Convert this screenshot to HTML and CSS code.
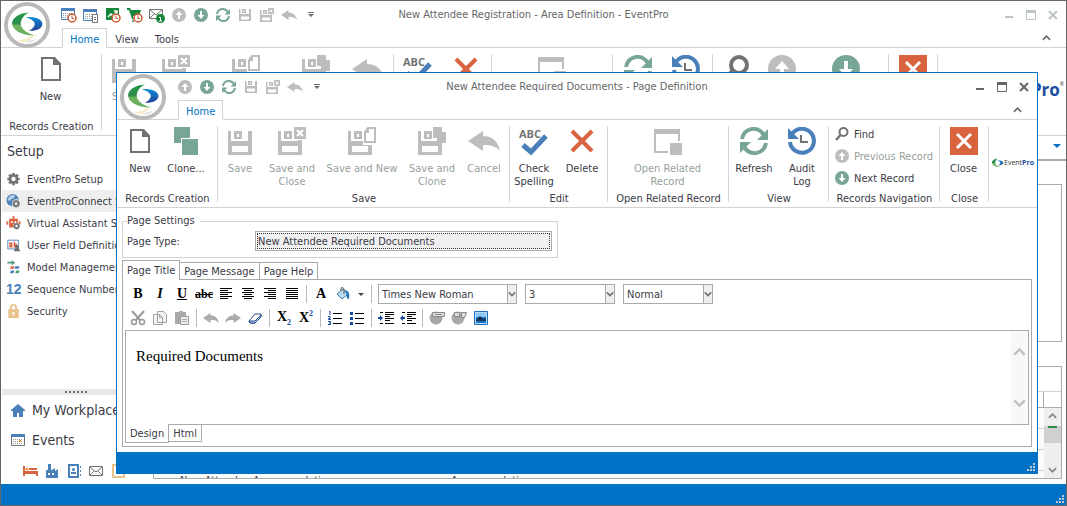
FILE: index.html
```html
<!DOCTYPE html>
<html lang="en">
<head>
<meta charset="utf-8">
<title>New Attendee Registration - Area Definition - EventPro</title>
<link rel="stylesheet" href="styles.css">
</head>
<body>
<svg class="defs" aria-hidden="true">
  <defs>
    <linearGradient id="gGreen" x1="0" y1="0" x2="0" y2="1"><stop offset="0" stop-color="#1f9a45"/><stop offset=".5" stop-color="#2f8b4c"/><stop offset=".55" stop-color="#6fb35f"/><stop offset="1" stop-color="#63ad5b"/></linearGradient>
    <linearGradient id="gBlue" x1="0" y1="0" x2="0" y2="1"><stop offset="0" stop-color="#0e8ade"/><stop offset=".5" stop-color="#1668b8"/><stop offset="1" stop-color="#263f91"/></linearGradient>
  </defs>
  <symbol id="swirl" viewBox="0 0 32 28"><path fill="url(#gGreen)" d="M18 1.500C8 2 .5 7 .5 13S10 26 26 25.500C17 24 9.500 19 9.500 13.500 9.500 8 13 4 18 1.500z"/><path fill="url(#gBlue)" d="M15 6.500C25 5.500 32 9 32 13.500S26 21 18 20.500c4-2 6-4.500 6-7S21 8.500 15 6.500z"/></symbol>
  <symbol id="orb" viewBox="0 0 46 46"><circle cx="23" cy="23" r="21" fill="#fff" stroke="#b9b9b9" stroke-width="4"/><svg x="7" y="9" width="32" height="27"><use href="#swirl"/></svg><path fill="#f5e9bd" d="M13 38c7 0 12-2 17-5-1 3-5 6-12 7z"/><path fill="#dedede" d="M20 40c5-1 9-2 13-3-3 3-8 4-13 3z"/></symbol>

  <symbol id="new" viewBox="0 0 28 28"><path fill="none" stroke="#727272" stroke-width="2" d="M5 3h12l6 6v16H5z"/><path fill="#727272" d="M16 2h2l6 7v1h-8z"/></symbol>
  <symbol id="clone" viewBox="0 0 28 28"><path fill="#77a596" d="M2 0h16v11h-9v5H2zM10 12h16v16H10z"/></symbol>
  <symbol id="floppy" viewBox="0 0 24 24"><path fill="currentColor" fill-rule="evenodd" d="M0 0h3v10h17V0h4v24H0zM4 15v6h16v-6zM6 0h8v8H6zM9 3v3h2V3z"/></symbol>
  <symbol id="save" viewBox="0 0 28 28"><svg x="2" y="4" width="24" height="24"><use href="#floppy"/></svg></symbol>
  <symbol id="saveclose" viewBox="0 0 28 28"><svg x="0" y="4" width="24" height="24"><use href="#floppy"/></svg><path fill="#fff" d="M15 0h13v13H15z"/><path fill="currentColor" d="M16 0h12v12H16z"/><path stroke="#fff" stroke-width="2" d="M19 3l6 6M25 3l-6 6"/></symbol>
  <symbol id="savenew" viewBox="0 0 28 28"><svg x="0" y="4" width="24" height="24"><use href="#floppy"/></svg><path fill="#fff" d="M15 0h13v18H15z"/><path fill="#fff" stroke="currentColor" stroke-width="2" d="M20 1h7v14H17V5z"/><path fill="currentColor" d="M16 6l5-5v5z"/></symbol>
  <symbol id="saveclone" viewBox="0 0 28 28"><svg x="0" y="4" width="24" height="24"><use href="#floppy"/></svg><path fill="currentColor" d="M15 0h9v5h4v11h-9v-5h-4z"/></symbol>
  <symbol id="undo" viewBox="0 0 32 28"><path fill="currentColor" d="M0 14L15 4v5c9 0 15 5 17 15-4-5-9-6-17-6v6z"/></symbol>
  <symbol id="check" viewBox="0 0 28 28"><path fill="none" stroke="#4a80ba" stroke-width="5" d="M3 18l8 7L26 9"/></symbol>
  <symbol id="delete" viewBox="0 0 28 28"><path stroke="#d9623f" stroke-width="4" d="M4 4l20 20M24 4L4 24"/></symbol>
  <symbol id="related" viewBox="0 0 28 28"><path fill="#bdbdbd" d="M0 2h26v5H0zM0 7h2v17h12v2H0zM24 7h2v7h-2zM16 16h12v12H16z"/></symbol>
  <symbol id="refresh" viewBox="0 0 28 28"><path fill="none" stroke="#77a596" stroke-width="4" d="M2 12C4 1 17-2 24 8M26 16C24 27 11 30 4 20"/><path fill="#77a596" d="M28 2v11H17zM0 26V15h11z"/></symbol>
  <symbol id="audit" viewBox="0 0 28 28"><path fill="none" stroke="#4a80ba" stroke-width="4" d="M4 7a12 12 0 1 1-2 8"/><path fill="#4a80ba" d="M0 1v11h11z"/><path fill="none" stroke="#727272" stroke-width="2" d="M13 8v7h7"/></symbol>
  <symbol id="find" viewBox="0 0 28 28"><circle cx="17" cy="10" r="8" fill="none" stroke="#727272" stroke-width="4"/><path stroke="#727272" stroke-width="5" d="M11 16L2 26"/></symbol>
  <symbol id="up" viewBox="0 0 28 28"><circle cx="14" cy="14" r="14" fill="#bdbdbd"/><path fill="#fff" d="M14 6l7 8h-5v8h-4v-8H7z"/></symbol>
  <symbol id="down" viewBox="0 0 28 28"><circle cx="14" cy="14" r="14" fill="#77a596"/><path fill="#fff" d="M14 22l7-8h-5V6h-4v8H7z"/></symbol>
  <symbol id="close" viewBox="0 0 28 28"><path fill="#d9623f" d="M0 0h28v28H0z"/><path stroke="#fff" stroke-width="3" d="M7 7l14 14M21 7L7 21"/></symbol>

  <symbol id="clock" viewBox="0 0 10 10"><circle cx="5" cy="5" r="4" fill="#fff" stroke="#c9562f" stroke-width="1.5"/><path fill="none" stroke="#c9562f" d="M5 2.500v3h2"/></symbol>
  <symbol id="cal" viewBox="0 0 14 13"><path fill="#fff" stroke="#4a80ba" d="M.5.5h13v11H.5z"/><path fill="#4a80ba" d="M0 0h14v3H0z"/><path stroke="#8b9bab" stroke-dasharray="1 1" d="M2 5.500h10M2 7.500h10M2 9.500h10"/></symbol>
  <symbol id="calclock" viewBox="0 0 16 16"><svg width="14" height="13" y="1"><use href="#cal"/></svg><svg x="6" y="6" width="10" height="10"><use href="#clock"/></svg></symbol>
  <symbol id="caldoc" viewBox="0 0 16 16"><svg width="14" height="13" y="2"><use href="#cal"/></svg><path fill="#fff" stroke="#727272" d="M9.500 7.500h5v8h-5z"/><path stroke="#727272" d="M11 10.500h2M11 12.500h2"/></symbol>
  <symbol id="chart" viewBox="0 0 16 16"><path fill="#15863a" d="M1 1h13v12H1z"/><path fill="none" stroke="#fff" stroke-width="1.500" d="M3 10l3-3 2 2 4-5M9 4h3v3"/><svg x="6" y="6" width="10" height="10"><use href="#clock"/></svg></symbol>
  <symbol id="cart" viewBox="0 0 16 16"><path fill="#15863a" d="M0 1h3l1 2h10l-2 6H6v2h7v1H5L2 3H0z"/><circle cx="6" cy="14" r="1" fill="#15863a"/><svg x="6" y="6" width="10" height="10"><use href="#clock"/></svg></symbol>
  <symbol id="mail" viewBox="0 0 16 16"><path fill="#fff" stroke="#727272" d="M1.500 3.500h13v9h-13zM2 4l6 5 6-5M2 12l4-4M14 12l-4-4"/></symbol>
  <symbol id="mailone" viewBox="0 0 16 16"><svg width="16" height="16" x="-1" y="-1"><use href="#mail"/></svg><circle cx="11.500" cy="11.500" r="4.500" fill="#15863a"/><path stroke="#fff" d="M10 10.500h1.500V14M10 14h3"/></symbol>

  <symbol id="gear" viewBox="0 0 16 16"><circle cx="8" cy="8" r="4" fill="none" stroke="currentColor" stroke-width="3"/><path stroke="currentColor" stroke-width="3" d="M8 1v3M8 12v3M1 8h3M12 8h3M3 3l2 2M11 11l2 2M13 3l-2 2M3 13l2-2"/></symbol>
  <symbol id="globe" viewBox="0 0 16 16"><circle cx="7" cy="7" r="7" fill="#4a80ba"/><path fill="#b5cde6" d="M3 3c3-3 6-2 7-1L8 5 5 6 4 8 1 7zM9 7l4-2v4H9z"/><circle cx="11" cy="11" r="5" fill="#efefef"/><svg x="6" y="6" width="10" height="10" color="#727272"><use href="#gear"/></svg></symbol>
  <symbol id="robot" viewBox="0 0 16 16"><path fill="#d9623f" d="M7 0h2v3h4v10H3V3h4zM0 6h2v4H0zM14 6h2v4h-2z"/><path fill="#fff" d="M5 6h2v2H5zM9 6h2v2H9z"/><circle cx="11.500" cy="11.500" r="4" fill="#fff"/><svg x="7" y="7" width="9" height="9" color="#727272"><use href="#gear"/></svg></symbol>
  <symbol id="field" viewBox="0 0 16 16"><path fill="#fff" stroke="#4a80ba" d="M1.500 2.500h12v10h-12z"/><path fill="none" stroke="#d9623f" stroke-width="1.500" d="M3 6h3v4H4V8h2M9 4v6h2V7H9"/><path fill="#727272" d="M10 8h4v4l2 3H8l2-3z"/></symbol>
  <symbol id="model" viewBox="0 0 16 16"><path fill="#4f9b7d" d="M1 2h5V0l4 3-4 3V4H1z"/><path fill="#4a80ba" d="M10 7h5l-1 3H9zM5 12h4l-1 3H4z"/><path fill="#d9623f" d="M5 7h4l-1 3H4z"/><path fill="#4f9b7d" d="M11 12h4l-1 3h-4z"/></symbol>
  <symbol id="lock" viewBox="0 0 16 16"><path fill="none" stroke="#e8c28b" stroke-width="2" d="M5 7V4c0-4 6-4 6 0v3"/><path fill="#e8c28b" d="M2 6h12v10H2z"/><path fill="#fff" d="M7 9h2v4H7z"/></symbol>
  <symbol id="house" viewBox="0 0 16 16"><path fill="#4a80ba" d="M8 2l7 6v1h-2v6H9v-4H7v4H3V9H1V8z"/></symbol>
  <symbol id="calbig" viewBox="0 0 16 16"><path fill="#fff" stroke="#727272" d="M1.500 2.500h13v11h-13z"/><path fill="#4a80ba" d="M1 2h14v3H1z"/><path stroke="#999" stroke-dasharray="1 1" d="M3 7.500h10M3 9.500h10M3 11.500h10"/><path fill="#e8953a" d="M9 8h2v2H9z"/></symbol>
  <symbol id="bed" viewBox="0 0 16 16"><path fill="#d9623f" d="M1 3h2v5h13v5h-2v-2H3v2H1zM7 5h8v2H7z"/><circle cx="5" cy="6" r="1.500" fill="#e8953a"/></symbol>
  <symbol id="factory" viewBox="0 0 16 16"><path fill="#4a80ba" d="M2 15V7h2V1h3v6h1l3-2v3l3-2v9z"/><path fill="#fff" d="M4 10h2v2H4zM8 10h2v2H8z"/></symbol>
  <symbol id="contact" viewBox="0 0 16 16"><path fill="#fff" stroke="#4a80ba" stroke-width="2" d="M3 2h9v12H3z"/><circle cx="7.500" cy="6.500" r="1.500" fill="#4a80ba"/><path fill="#4a80ba" d="M5 9h5v2H5zM14 3h1v2h-1zM14 7h1v2h-1zM14 11h1v2h-1z"/></symbol>
  <symbol id="board" viewBox="0 0 16 16"><path fill="#fff" stroke="#e8c28b" stroke-width="2" d="M3 2h11v12H3z"/><path fill="#4a80ba" d="M6 5h5v2H6z"/></symbol>
  <symbol id="chev" viewBox="0 0 10 6"><path fill="none" stroke="currentColor" stroke-width="2" d="M1 5l4-4 4 4"/></symbol>
  <symbol id="more" viewBox="0 0 6 6"><path fill="#727272" d="M0 0h6v1H0zM0 2h6L3 5z"/></symbol>
  <symbol id="wmin" viewBox="0 0 12 12"><path fill="currentColor" d="M2 7h8v2H2z"/></symbol>
  <symbol id="wmax" viewBox="0 0 12 12"><path fill="none" stroke="currentColor" d="M1.500 1.500h9v9h-9z"/><path fill="currentColor" d="M1 1h10v3H1z"/></symbol>
  <symbol id="wx" viewBox="0 0 12 12"><path stroke="currentColor" stroke-width="2" d="M2 2l8 8M10 2l-8 8"/></symbol>
  <symbol id="grip" viewBox="0 0 8 8"><path fill="#c3cbd2" d="M6 0h2v2H6zM6 3h2v2H6zM3 3h2v2H3zM6 6h2v2H6zM3 6h2v2H3zM0 6h2v2H0z"/></symbol>

  <symbol id="left" viewBox="0 0 16 16"><path stroke="#000" d="M2 2.500h12M2 4.500h8M2 6.500h12M2 8.500h8M2 10.500h12M2 12.500h8"/></symbol>
  <symbol id="center" viewBox="0 0 16 16"><path stroke="#000" d="M2 2.500h12M4 4.500h8M2 6.500h12M4 8.500h8M2 10.500h12M4 12.500h8"/></symbol>
  <symbol id="right" viewBox="0 0 16 16"><path stroke="#000" d="M2 2.500h12M6 4.500h8M2 6.500h12M6 8.500h8M2 10.500h12M6 12.500h8"/></symbol>
  <symbol id="justify" viewBox="0 0 16 16"><path stroke="#000" d="M2 2.500h12M2 4.500h12M2 6.500h12M2 8.500h12M2 10.500h12M2 12.500h12"/></symbol>
  <symbol id="bucket" viewBox="0 0 16 16"><path fill="#b9dcf3" stroke="#3d7ba8" d="M2 8l6-5 5 5-6 5z"/><path fill="none" stroke="#555" d="M6 5V2c2-1 3 0 3 2v4"/><path fill="#2f78bd" d="M9 4c5 0 6 4 5 9-3 0-2-3-3-6z"/></symbol>
  <symbol id="cut" viewBox="0 0 16 16"><path stroke="#999" stroke-width="2" d="M2 1l8 9M14 1l-8 9"/><circle cx="4" cy="12" r="2.500" fill="#fff" stroke="#999" stroke-width="1.500"/><circle cx="12" cy="12" r="2.500" fill="#fff" stroke="#999" stroke-width="1.500"/></symbol>
  <symbol id="copy" viewBox="0 0 16 16"><path fill="#f4f4f4" stroke="#a3a3a3" d="M5.500 1.500h6l3 3v8h-9zM1.500 4.500h6l3 3v7h-9zM7.500 4.500v3h3"/></symbol>
  <symbol id="paste" viewBox="0 0 16 16"><path fill="#aaa" d="M1 2h4V1h4v1h3v12H1z"/><path fill="#eee" stroke="#999" d="M6.500 6.500h8v8h-8z"/><path stroke="#aaa" d="M8 9.500h5M8 11.500h5"/></symbol>
  <symbol id="eraser" viewBox="0 0 16 16"><path fill="#fff" stroke="#244a8c" d="M2 11l6-7h6v2l-6 7H3z"/><path fill="#b9cff0" stroke="#244a8c" d="M2 11h6l6-6v2l-6 6H3z"/></symbol>
  <symbol id="numlist" viewBox="0 0 16 16"><path stroke="#000" d="M6 3.500h9M6 8.500h9M6 13.500h9"/><path fill="none" stroke="#174a9c" d="M2 1.500h1V5M1 6.500h2v2H1.500v1H4M1 11.500h2.500v3H1M2 13h1"/></symbol>
  <symbol id="bullist" viewBox="0 0 16 16"><path stroke="#000" d="M6 3.500h9M6 8.500h9M6 13.500h9"/><path fill="#174a9c" d="M1 2h3v3H1zM1 7h3v3H1zM1 12h3v3H1z"/></symbol>
  <symbol id="indent" viewBox="0 0 16 16"><path stroke="#000" d="M2 2.500h3M7 2.500h9M7 4.500h9M7 6.500h5M7 8.500h9M7 10.500h5M2 13.500h3M7 13.500h9"/><path fill="#174a9c" d="M0 7h2V5l3 3-3 3V9H0z"/></symbol>
  <symbol id="outdent" viewBox="0 0 16 16"><path stroke="#000" d="M2 2.500h3M7 2.500h9M7 4.500h9M7 6.500h5M7 8.500h9M7 10.500h5M2 13.500h3M7 13.500h9"/><path fill="#174a9c" d="M5 7H3V5L0 8l3 3V9h2z"/></symbol>
  <symbol id="link" viewBox="0 0 16 16"><circle cx="7" cy="8" r="6.500" fill="#a8a8a8"/><path fill="#ddd" stroke="#888" d="M3.500 2.500h12v4h-12z"/><path stroke="#888" d="M6 4.500h7"/></symbol>
  <symbol id="unlink" viewBox="0 0 16 16"><circle cx="7" cy="8" r="6.500" fill="#a8a8a8"/><path fill="#ddd" stroke="#888" d="M3.500 2.500h5v4h-5zM10.500 2.500h5l-2 5h-3z"/></symbol>
  <symbol id="image" viewBox="0 0 16 16"><path fill="#b9dcf8" stroke="#1f6fc0" d="M1.500 1.500h13v13h-13z"/><path fill="#1474d0" d="M3 3h10v10H3z"/><path fill="#8cc7f7" d="M3 3h10v4H3z"/><path fill="#16324f" d="M3 10l4-4 3 3 2-1 1 2v1H3z"/></symbol>
</svg>

<div class="window main">
  <header class="header">
    <svg class="orb"><use href="#orb"/></svg>
    <div class="quick">
      <button aria-label="Event calendar"><svg><use href="#calclock"/></svg></button>
      <button aria-label="Event list"><svg><use href="#caldoc"/></svg></button>
      <button aria-label="Reports"><svg><use href="#chart"/></svg></button>
      <button aria-label="Orders"><svg><use href="#cart"/></svg></button>
      <button aria-label="Messages"><svg><use href="#mailone"/></svg></button>
      <button aria-label="Previous"><svg class="i14"><use href="#up"/></svg></button>
      <button aria-label="Next"><svg class="i14"><use href="#down"/></svg></button>
      <button aria-label="Refresh"><svg class="i14"><use href="#refresh"/></svg></button>
      <button aria-label="Save" class="off"><svg class="i12"><use href="#floppy"/></svg></button>
      <button aria-label="Save and close" class="off"><svg class="i14"><use href="#saveclose"/></svg></button>
      <button aria-label="Undo" class="off"><svg><use href="#undo"/></svg></button>
      <button aria-label="Customize"><svg class="i6"><use href="#more"/></svg></button>
    </div>
    <h1 class="caption">New Attendee Registration - Area Definition - EventPro</h1>
    <div class="controls faded">
      <button aria-label="Minimize"><svg><use href="#wmin"/></svg></button>
      <button aria-label="Maximize"><svg><use href="#wmax"/></svg></button>
      <button aria-label="Close window"><svg><use href="#wx"/></svg></button>
    </div>
    <nav class="tabs">
      <a href="#home" class="current">Home</a><a href="#view">View</a><a href="#tools">Tools</a>
      <button aria-label="Collapse ribbon"><svg><use href="#chev"/></svg></button>
    </nav>
  </header>
  <div class="ribbon">
    <section class="group g-create"><div class="tools"><button><svg><use href="#new"/></svg>New</button></div><h2>Records Creation</h2></section>
    <section class="group g-save"><div class="tools">
      <button class="off w44"><svg><use href="#save"/></svg>Save</button>
      <button class="off w60"><svg><use href="#saveclose"/></svg>Save and<br>Close</button>
      <button class="off w80"><svg><use href="#savenew"/></svg>Save and New</button>
      <button class="off w60"><svg><use href="#saveclone"/></svg>Save and<br>Clone</button>
      <button class="off w44"><svg class="wide"><use href="#undo"/></svg>Cancel</button>
    </div><h2>Save</h2></section>
    <section class="group g-edit"><div class="tools">
      <button class="w48"><span class="spell"><b>ABC</b><svg><use href="#check"/></svg></span>Check<br>Spelling</button>
      <button class="w48"><svg><use href="#delete"/></svg>Delete</button>
    </div><h2>Edit</h2></section>
    <section class="group g-related"><div class="tools"><button class="off"><svg><use href="#related"/></svg>Open Related<br>Record</button></div><h2>Open Related Record</h2></section>
    <section class="group g-view"><div class="tools">
      <button class="w48"><svg><use href="#refresh"/></svg>Refresh</button>
      <button class="w48"><svg><use href="#audit"/></svg>Audit<br>Log</button>
    </div><h2>View</h2></section>
    <section class="group g-navwide"><div class="tools">
      <button class="w44"><svg><use href="#find"/></svg>Find</button>
      <button class="w48 off"><svg><use href="#up"/></svg>Previous</button>
      <button class="w80"><svg><use href="#down"/></svg>Next Record</button>
    </div><h2>Records Navigation</h2></section>
    <section class="group g-close"><div class="tools"><button><svg><use href="#close"/></svg>Close</button></div><h2>Close</h2></section>
    <div class="brand large"><svg><use href="#swirl"/></svg><span>Event<b>Pro</b></span><sup>®</sup></div>
  </div>

  <div class="workspace">
    <aside class="sidebar">
      <h2>Setup</h2>
      <nav class="items">
        <a href="#setup"><svg color="#727272"><use href="#gear"/></svg>EventPro Setup</a>
        <a href="#connect" class="picked"><svg><use href="#globe"/></svg>EventProConnect Setup</a>
        <a href="#assistant"><svg><use href="#robot"/></svg>Virtual Assistant Setup</a>
        <a href="#fields"><svg><use href="#field"/></svg>User Field Definitions</a>
        <a href="#models"><svg><use href="#model"/></svg>Model Management</a>
        <a href="#sequence"><b class="twelve">12</b>Sequence Numbers</a>
        <a href="#security"><svg><use href="#lock"/></svg>Security</a>
      </nav>
      <div class="splitter"></div>
      <nav class="areas">
        <a href="#workplace"><svg><use href="#house"/></svg>My Workplace</a>
        <a href="#events"><svg><use href="#calbig"/></svg>Events</a>
      </nav>
      <div class="shortcuts">
        <button aria-label="Rooms"><svg><use href="#bed"/></svg></button>
        <button aria-label="Venues"><svg><use href="#factory"/></svg></button>
        <button aria-label="Contacts"><svg><use href="#contact"/></svg></button>
        <button aria-label="Mail"><svg><use href="#mail"/></svg></button>
        <button aria-label="Setup"><svg><use href="#board"/></svg></button>
      </div>
    </aside>
    <main class="content">
      <div class="strip"><i class="tri"></i></div>
      <div class="panel upper"></div>
      <div class="panel lower">
        <div class="find-row"></div>
        <div class="gridhead"><span></span></div>
        <div class="gridbody">
          <ul class="rows"><li></li><li></li><li></li><li><span>New Attendee Accommodation</span><span>Accommodation</span></li></ul>
          <div class="scroll"><svg><use href="#chev"/></svg><i class="thumb"></i><svg class="flip"><use href="#chev"/></svg></div>
        </div>
      </div>
    </main>
  </div>
  <footer class="status"><svg><use href="#grip"/></svg></footer>
</div>

<div class="window dialog" role="dialog" aria-label="New Attendee Required Documents">
  <header class="header">
    <svg class="orb"><use href="#orb"/></svg>
    <div class="quick">
      <button aria-label="Previous"><svg class="i14"><use href="#up"/></svg></button>
      <button aria-label="Next"><svg class="i14"><use href="#down"/></svg></button>
      <button aria-label="Refresh"><svg class="i14"><use href="#refresh"/></svg></button>
      <button aria-label="Save" class="off"><svg class="i12"><use href="#floppy"/></svg></button>
      <button aria-label="Save and close" class="off"><svg class="i14"><use href="#saveclose"/></svg></button>
      <button aria-label="Undo" class="off"><svg><use href="#undo"/></svg></button>
      <button aria-label="Customize"><svg class="i6"><use href="#more"/></svg></button>
    </div>
    <h1 class="caption">New Attendee Required Documents - Page Definition</h1>
    <div class="controls">
      <button aria-label="Minimize"><svg><use href="#wmin"/></svg></button>
      <button aria-label="Maximize"><svg><use href="#wmax"/></svg></button>
      <button aria-label="Close window"><svg><use href="#wx"/></svg></button>
    </div>
    <nav class="tabs">
      <a href="#home" class="current">Home</a>
      <button aria-label="Collapse ribbon"><svg><use href="#chev"/></svg></button>
    </nav>
  </header>
  <div class="ribbon">
    <section class="group g-create"><div class="tools start">
      <button class="w44"><svg><use href="#new"/></svg>New</button>
      <button class="w48"><svg><use href="#clone"/></svg>Clone...</button>
    </div><h2>Records Creation</h2></section>
    <section class="group g-save"><div class="tools">
      <button class="off w44"><svg><use href="#save"/></svg>Save</button>
      <button class="off w60"><svg><use href="#saveclose"/></svg>Save and<br>Close</button>
      <button class="off w80"><svg><use href="#savenew"/></svg>Save and New</button>
      <button class="off w60"><svg><use href="#saveclone"/></svg>Save and<br>Clone</button>
      <button class="off w44"><svg class="wide"><use href="#undo"/></svg>Cancel</button>
    </div><h2>Save</h2></section>
    <section class="group g-edit"><div class="tools">
      <button class="w48"><span class="spell"><b>ABC</b><svg><use href="#check"/></svg></span>Check<br>Spelling</button>
      <button class="w48"><svg><use href="#delete"/></svg>Delete</button>
    </div><h2>Edit</h2></section>
    <section class="group g-related"><div class="tools"><button class="off"><svg><use href="#related"/></svg>Open Related<br>Record</button></div><h2>Open Related Record</h2></section>
    <section class="group g-view"><div class="tools">
      <button class="w48"><svg><use href="#refresh"/></svg>Refresh</button>
      <button class="w48"><svg><use href="#audit"/></svg>Audit<br>Log</button>
    </div><h2>View</h2></section>
    <section class="group g-nav"><div class="stack">
      <button><svg><use href="#find"/></svg>Find</button>
      <button class="off"><svg><use href="#up"/></svg>Previous Record</button>
      <button><svg><use href="#down"/></svg>Next Record</button>
    </div><h2>Records Navigation</h2></section>
    <section class="group g-close"><div class="tools"><button><svg><use href="#close"/></svg>Close</button></div><h2>Close</h2></section>
    <div class="brand"><svg><use href="#swirl"/></svg><span>Event<b>Pro</b></span></div>
  </div>

  <div class="form">
    <fieldset class="settings">
      <legend>Page Settings</legend>
      <label for="ptype">Page Type:</label>
      <div class="field"><input id="ptype" type="text" readonly value="New Attendee Required Documents"></div>
    </fieldset>
    <div class="pagetabs">
      <button class="current">Page Title</button><button>Page Message</button><button>Page Help</button>
    </div>
    <div class="pane">
      <div class="bar">
        <button aria-label="Bold"><b>B</b></button><button aria-label="Italic"><b><i>I</i></b></button><button aria-label="Underline"><b><u>U</u></b></button><button aria-label="Strikethrough"><b class="strike">abc</b></button>
        <button aria-label="Align left"><svg><use href="#left"/></svg></button><button aria-label="Align center"><svg><use href="#center"/></svg></button><button aria-label="Align right"><svg><use href="#right"/></svg></button><button aria-label="Justify"><svg><use href="#justify"/></svg></button>
        <span class="sep"></span>
        <button aria-label="Font colour"><b>A</b></button><button aria-label="Fill colour"><svg><use href="#bucket"/></svg></button><button aria-label="More colours" class="slim"><i class="tri small"></i></button>
        <span class="sep"></span>
        <div class="picks">
          <div class="pick font"><select aria-label="Font"><option>Times New Roman</option></select><svg><use href="#chev"/></svg></div>
          <div class="pick"><select aria-label="Size"><option>3</option></select><svg><use href="#chev"/></svg></div>
          <div class="pick"><select aria-label="Style"><option>Normal</option></select><svg><use href="#chev"/></svg></div>
        </div>
      </div>
      <div class="bar">
        <button aria-label="Cut"><svg><use href="#cut"/></svg></button><button aria-label="Copy"><svg><use href="#copy"/></svg></button><button aria-label="Paste"><svg><use href="#paste"/></svg></button>
        <span class="sep"></span>
        <button aria-label="Undo" class="off"><svg><use href="#undo"/></svg></button><button aria-label="Redo" class="off"><svg class="mirror"><use href="#undo"/></svg></button><button aria-label="Clear"><svg><use href="#eraser"/></svg></button>
        <span class="sep"></span>
        <button aria-label="Subscript"><b>X<sub>2</sub></b></button><button aria-label="Superscript"><b>X<sup>2</sup></b></button>
        <span class="sep"></span>
        <button aria-label="Numbered list"><svg><use href="#numlist"/></svg></button><button aria-label="Bulleted list"><svg><use href="#bullist"/></svg></button>
        <span class="sep"></span>
        <button aria-label="Indent"><svg><use href="#indent"/></svg></button><button aria-label="Outdent"><svg><use href="#outdent"/></svg></button>
        <span class="sep"></span>
        <button aria-label="Link"><svg><use href="#link"/></svg></button><button aria-label="Remove link"><svg><use href="#unlink"/></svg></button><button aria-label="Image"><svg><use href="#image"/></svg></button>
      </div>
      <div class="editor">
        <textarea aria-label="Page title">Required Documents</textarea>
        <div class="rail"><svg><use href="#chev"/></svg><svg class="flip"><use href="#chev"/></svg></div>
      </div>
      <div class="modes"><button class="current">Design</button><button>Html</button></div>
    </div>
  </div>
  <footer class="status"><svg><use href="#grip"/></svg></footer>
</div>
</body>
</html>
```
FILE: styles.css
```css
* { box-sizing: border-box; }
body { margin: 0; overflow: hidden; font: 11px/13px "DejaVu Sans Condensed", "Noto Sans", sans-serif; color: #3b3b46; }
button { padding: 0; border: 0; background: none; font: inherit; color: inherit; }
a { color: inherit; text-decoration: none; }
h1, h2, ul { margin: 0; padding: 0; font-size: 11px; font-weight: 400; list-style: none; }
svg { display: block; flex: none; }
.defs { position: absolute; width: 0; height: 0; }
.off { color: #bdbdbd; }

/* Window frame */
.window { display: flex; flex-direction: column; background: #fff; }
.main { height: 100vh; border: 1px solid #666; }
.dialog { position: fixed; inset: 72px 29px 32px 116px; border: 1px solid #0072c6; }
.header { display: grid; grid-template: 27px 20px / 61px minmax(0, 1fr) auto minmax(0, 1fr) 61px; flex: none; box-shadow: inset 0 -1px #d2d2d2; }
.orb { grid-row: 1 / 3; width: 46px; height: 46px; margin: 1px 0 0 3px; }
.quick { display: flex; margin-left: -4px; }
.quick button { display: grid; place-items: center; width: 22px; }
.quick svg { width: 16px; height: 16px; }
.quick .i14 { width: 14px; height: 14px; }
.quick .i12 { width: 12px; height: 12px; }
.quick .i6 { width: 6px; height: 6px; }
.caption { align-self: center; color: #666; }
.controls { grid-column: 4 / 6; display: flex; justify-content: flex-end; padding-right: 2px; color: #666; }
.controls.faded { color: #bcc5bf; }
.controls button { display: grid; place-items: center; width: 22px; }
.controls svg { width: 12px; height: 12px; }
.tabs { grid-column: 2 / 6; display: flex; }
.tabs a { padding: 4px 7px 0; border: 1px solid transparent; }
.tabs .current { border-color: #d2d2d2; border-bottom-color: #fff; background: #fff; color: #0072c6; }
.tabs button { margin: 0 15px 0 auto; color: #727272; }
.tabs svg { width: 9px; height: 6px; }

/* Ribbon */
.ribbon { display: flex; flex: none; height: 88px; padding: 3px 0 2px; border-bottom: 1px solid #d2d2d2; }
.group { display: flex; flex-direction: column; flex: none; background: linear-gradient(#d6d6d6, #d6d6d6) right 3px / 1px 76px no-repeat; text-align: center; white-space: nowrap; }
.group h2 { margin-top: auto; }
.g-create { width: 101px; }
.g-save { width: 292px; }
.g-edit { width: 98px; }
.g-related { width: 121px; }
.g-view { width: 100px; }
.g-nav { width: 111px; }
.g-navwide { width: 176px; }
.g-close { width: 49px; }
.tools { display: flex; justify-content: center; padding: 4px 2px 0 0; }
.tools.start { justify-content: flex-start; padding-left: 1px; }
.g-save .tools { justify-content: flex-start; }
.tools button { display: flex; flex-direction: column; align-items: center; gap: 7px; }
.tools svg { width: 28px; height: 28px; }
.tools .wide { width: 32px; }
.group .off { color: #979f9b; }
.group .off svg { color: #bdbdbd; }
.w44 { width: 44px; }
.w48 { width: 48px; }
.w60 { width: 60px; }
.w80 { width: 80px; }
.spell { position: relative; }
.spell b { position: absolute; left: -1px; top: 0; font: 700 11px/13px "Open Sans", sans-serif; color: #727272; }
.stack { display: flex; flex-direction: column; align-items: flex-start; padding-left: 6px; }
.stack button { display: flex; align-items: center; gap: 5px; height: 22px; }
.stack svg { width: 14px; height: 14px; }
.brand { display: flex; align-items: center; flex: 1; padding: 0 0 2px 2px; font: 7px/10px "Open Sans", sans-serif; color: #333; }
.brand svg { width: 13px; height: 10px; }
.brand b { color: #1c4f9f; }
.brand.large { align-items: flex-start; justify-content: flex-end; padding: 29px 2px 0 0; font-size: 17px; line-height: 20px; }
.brand.large svg { width: 32px; height: 24px; }
.brand sup { font-size: 5px; line-height: 8px; }

/* Sidebar */
.workspace { display: flex; flex: 1; min-height: 0; }
.sidebar { display: flex; flex-direction: column; width: 150px; padding-left: 1px; overflow: hidden; white-space: nowrap; }
.sidebar h2 { padding: 7px 5px 9px; font-size: 14px; line-height: 16px; }
.items a { display: flex; align-items: center; gap: 6px; height: 22px; padding-left: 4px; }
.items svg { width: 15px; height: 14px; }
.picked { background: #eee; }
.twelve { width: 15px; font: 700 14px/16px "Liberation Sans", sans-serif; color: #4a80ba; }
.splitter { display: grid; place-items: center; height: 6px; margin-top: auto; background: #e8e8e8; }
.splitter::after { content: ""; width: 23px; height: 2px; background: repeating-linear-gradient(90deg, #727272 0 2px, transparent 2px 4px); }
.areas a { display: flex; align-items: center; gap: 6px; height: 30px; padding-left: 8px; font-size: 14px; line-height: 18px; }
.areas svg { width: 16px; height: 16px; }
.shortcuts { display: flex; gap: 6px; padding: 8px 0 5px 20px; }
.shortcuts svg { width: 16px; height: 16px; }

/* Area behind the dialog */
.content { display: flex; flex: 1; flex-direction: column; min-width: 0; padding: 0 4px 5px 2px; }
.strip { display: flex; align-items: center; justify-content: flex-end; flex: none; height: 25px; margin: 0 -4px 23px 0; padding: 0 5px 4px 0; border-bottom: 2px solid #aaa; }
.tri { border: solid transparent; border-width: 4px 4px 0; border-top-color: #0072c6; }
.tri.small { border-width: 3px 3px 0; border-top-color: #444; }
.panel { border: 1px solid #aaa; }
.upper { flex: 1; margin-bottom: 24px; }
.lower { flex: none; }
.find-row { height: 25px; border-bottom: 1px solid #d2d2d2; }
.gridhead { display: flex; justify-content: flex-end; height: 16px; border-bottom: 1px solid #aaa; }
.gridhead span { width: 18px; border-left: 1px solid #aaa; }
.gridbody { display: flex; height: 70px; overflow: hidden; }
.rows { flex: 1; }
.rows li { display: grid; grid-template-columns: 271px 1fr; height: 21px; padding: 3px 26px; border-bottom: 1px solid #d2d2d2; background: #fafafa; }
.scroll { display: flex; flex-direction: column; align-items: center; justify-content: space-between; width: 17px; padding: 5px 0; background: #eee; color: #888; }
.scroll svg { width: 9px; height: 6px; }
.thumb { width: 17px; height: 17px; margin-bottom: 18px; border: solid #d0d0d0; border-width: 0 4px; background: linear-gradient(#2d8b4e 2px, #d0d0d0 2px); }
.flip { transform: rotate(180deg); }
.mirror { transform: scaleX(-1); }
.status { display: flex; align-items: flex-end; justify-content: flex-end; flex: none; height: 21px; padding: 2px; background: #0072c6; }
.status svg { width: 8px; height: 8px; }

/* Dialog form */
.form { display: flex; flex: 1; flex-direction: column; min-height: 0; padding: 7px 5px 5px; }
.settings { display: flex; align-items: center; width: 436px; min-width: 0; height: 43px; margin: 0; padding: 4px 5px 3px 4px; border: 1px solid #d2d2d2; }
.settings legend { padding: 0 5px 0 0; line-height: 12px; }
.settings label { width: 128px; }
.field { flex: 1; padding: 1px; border: 1px solid #aaa; }
.field input { display: block; width: 100%; height: 16px; padding: 0; border: 1px dotted #333; outline: 0; background: #f0f0f0; font: inherit; color: inherit; }
.pagetabs { display: flex; align-items: flex-end; margin-top: 2px; }
.pagetabs button { height: 17px; padding: 0 4px; border: 1px solid #aaa; border-width: 1px 1px 0 0; background: #fff; }
.pagetabs .current { height: 20px; margin-bottom: -1px; border-left-width: 1px; z-index: 1; }
.pane { display: flex; flex: 1; flex-direction: column; min-height: 0; padding: 2px; border: 1px solid #aaa; }
.bar { display: flex; align-items: center; flex: none; height: 24px; padding-left: 2px; }
.bar button { display: grid; flex: none; place-items: center; width: 22px; height: 22px; color: #000; }
.bar .off { color: #aaa; }
.bar .slim { width: 14px; }
.bar b { font: 700 14px/16px "Liberation Serif", serif; white-space: nowrap; }
.bar .strike { font-size: 12px; text-decoration: line-through; }
.bar sub, .bar sup { font-size: 8px; line-height: 8px; color: #174a9c; }
.bar svg { width: 16px; height: 16px; }
.sep { width: 1px; height: 18px; margin: 0 3px; background: #bbb; }
.picks { display: flex; gap: 8px; margin-left: 3px; }
.pick { position: relative; width: 90px; }
.pick.font { width: 139px; }
.pick select { display: block; width: 100%; height: 20px; padding: 0 3px; border: 1px solid #aaa; border-radius: 0; appearance: none; background: linear-gradient(90deg, #aaa 1px, #efefef 1px) right / 9px 100% no-repeat #fff; font: inherit; color: inherit; }
.bar .pick svg { position: absolute; right: 1px; top: 7px; width: 8px; height: 6px; transform: rotate(180deg); color: #727272; pointer-events: none; }
.editor { display: flex; flex: 1; border: 1px solid #aaa; }
.editor textarea { flex: 1; padding: 15px 10px; border: 0; outline: 0; resize: none; font: 15px/20px "Liberation Serif", serif; color: #000; }
.rail { display: flex; flex-direction: column; justify-content: space-between; align-items: center; width: 17px; padding: 17px 0; background: #f8f8f8; color: #c2c2c2; }
.rail svg { width: 13px; height: 8px; }
.modes { display: flex; align-items: flex-start; flex: none; height: 19px; }
.modes button { height: 17px; padding: 0 4px; border: 1px solid #aaa; border-width: 0 1px 1px 0; background: #fff; }
.modes .current { height: 19px; margin-top: -1px; border-left-width: 1px; }
```
